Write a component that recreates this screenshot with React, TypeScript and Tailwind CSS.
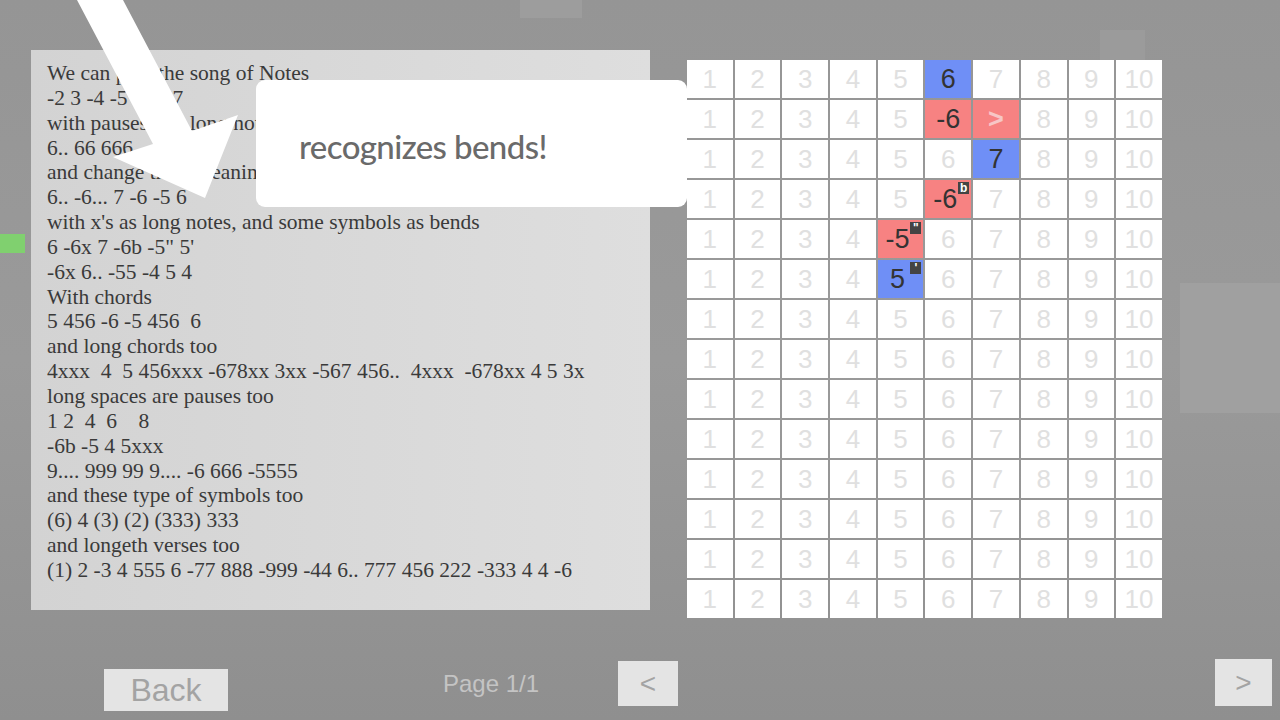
import React from 'react';

const lines: string[] = [
  'We can play the song of Notes',
  '-2 3 -4 -5 6 -6 7',
  'with pauses and long notes',
  '6.. 66 666',
  'and change their meaning',
  '6.. -6... 7 -6 -5 6',
  "with x's as long notes, and some symbols as bends",
  '6 -6x 7 -6b -5" 5\'',
  '-6x 6.. -55 -4 5 4',
  'With chords',
  '5 456 -6 -5 456  6',
  'and long chords too',
  '4xxx  4  5 456xxx -678xx 3xx -567 456..  4xxx  -678xx 4 5 3x',
  'long spaces are pauses too',
  '1 2  4  6    8',
  '-6b -5 4 5xxx',
  '9.... 999 99 9.... -6 666 -5555',
  'and these type of symbols too',
  '(6) 4 (3) (2) (333) 333',
  'and longeth verses too',
  '(1) 2 -3 4 555 6 -77 888 -999 -44 6.. 777 456 222 -333 4 4 -6',
];

type Mark = { color: 'blue' | 'red'; label: string; badge?: string; faded?: boolean };

// row index -> column index (0-based) -> mark
const marks: Record<number, Record<number, Mark>> = {
  0: { 5: { color: 'blue', label: '6' } },
  1: { 5: { color: 'red', label: '-6' }, 6: { color: 'red', label: '>', faded: true } },
  2: { 6: { color: 'blue', label: '7' } },
  3: { 5: { color: 'red', label: '-6', badge: 'b' } },
  4: { 4: { color: 'red', label: '-5', badge: '"' } },
  5: { 4: { color: 'blue', label: '5', badge: "'" } },
};

const rows = Array.from({ length: 14 }, (_, i) => i);
const cols = Array.from({ length: 10 }, (_, i) => i + 1);

const Cell: React.FC<{ n: number; mark?: Mark }> = ({ n, mark }) => {
  if (!mark) {
    return (
      <div className="w-[45.7px] h-[38px] bg-white flex items-center justify-center text-[26px] text-[#e0e0e0] font-['Liberation_Sans',Arial,sans-serif]">
        {n}
      </div>
    );
  }
  const bg = mark.color === 'blue' ? 'bg-[#6f8ff6]' : 'bg-[#f78282]';
  return (
    <div
      className={`relative w-[45.7px] h-[38px] ${bg} flex items-center justify-center text-[27px] font-['Liberation_Sans',Arial,sans-serif] ${
        mark.faded ? 'text-[#f7c6c6] font-bold' : 'text-[#333]'
      }`}
    >
      <span className={mark.badge ? 'pr-[6px]' : ''}>{mark.label}</span>
      {mark.badge && (
        <span className="absolute right-[2px] top-[2px] w-[11px] h-[12px] bg-[#444] text-white text-[12px] leading-[13px] text-center font-bold">
          {mark.badge}
        </span>
      )}
    </div>
  );
};

const Arrow: React.FC = () => (
  <svg className="absolute left-0 top-0" width="260" height="210" viewBox="0 0 260 210">
    <polygon points="77,0 153,144 113,157 205,198 238,115 192,131 123,0" fill="#ffffff" />
  </svg>
);

export default function App() {
  return (
    <div className="relative w-[1280px] h-[720px] overflow-hidden bg-gradient-to-b from-[#959595] via-[#9a9a9a] to-[#8f8f8f]">
      {/* faint background blocks */}
      <div className="absolute left-[520px] top-0 w-[62px] h-[18px] bg-[#9d9d9d]" />
      <div className="absolute left-[1180px] top-[283px] w-[100px] h-[130px] bg-[#a0a0a0]" />
      <div className="absolute left-[1100px] top-[30px] w-[45px] h-[30px] bg-[#9b9b9b]" />

      {/* selection marker */}
      <div className="absolute left-0 top-[234px] w-[25px] h-[19px] bg-[#80d06f]" />

      <div className="relative flex h-[620px]">
        <div className="ml-[31px] mt-[50px] w-[619px] h-[560px] bg-gradient-to-r from-[#d3d3d3] to-[#dedede] pl-[16px] pt-[11px] text-[21.5px] leading-[24.85px] text-[#3a3a3a] font-['Liberation_Serif','Times_New_Roman',serif] whitespace-pre">
          {lines.map((l, i) => (
            <div key={i}>{l}</div>
          ))}
        </div>

        <div className="ml-[37px] mt-[60px] flex flex-col gap-y-[2px]">
          {rows.map((r) => (
            <div key={r} className="flex gap-x-[2px]">
              {cols.map((c, ci) => (
                <Cell key={c} n={c} mark={marks[r]?.[ci]} />
              ))}
            </div>
          ))}
        </div>
      </div>

      {/* bottom controls */}
      <div className="relative flex items-start h-[100px]">
        <button className="ml-[104px] mt-[49px] w-[124px] h-[42px] bg-[#e4e4e4] text-[32px] leading-[42px] text-[#a3a3a3] font-['Liberation_Sans',Arial,sans-serif]">
          Back
        </button>
        <div className="ml-[215px] mt-[50px] w-[97px] text-[24px] leading-[28px] text-[#c4c4c4] font-['Liberation_Sans',Arial,sans-serif] whitespace-nowrap">
          Page 1/1
        </div>
        <button className="ml-[78px] mt-[41px] w-[60px] h-[45px] bg-[#e4e4e4] text-[28px] leading-[40px] text-[#a3a3a3] font-['Liberation_Sans',Arial,sans-serif]">
          &lt;
        </button>
        <button className="ml-auto mr-[8px] mt-[39px] w-[57px] h-[47px] bg-[#e4e4e4] text-[28px] leading-[42px] text-[#a3a3a3] font-['Liberation_Sans',Arial,sans-serif]">
          &gt;
        </button>
      </div>

      {/* tutorial overlay */}
      <Arrow />
      <div className="absolute left-[256px] top-[80px] w-[431px] h-[127px] bg-white rounded-[9px] flex items-center pl-[43px] pt-[6px]">
        <span className="text-[33px] tracking-[-0.6px] text-[#6a6a6a] font-['Lato',sans-serif] font-medium">
          recognizes bends!
        </span>
      </div>
    </div>
  );
}
